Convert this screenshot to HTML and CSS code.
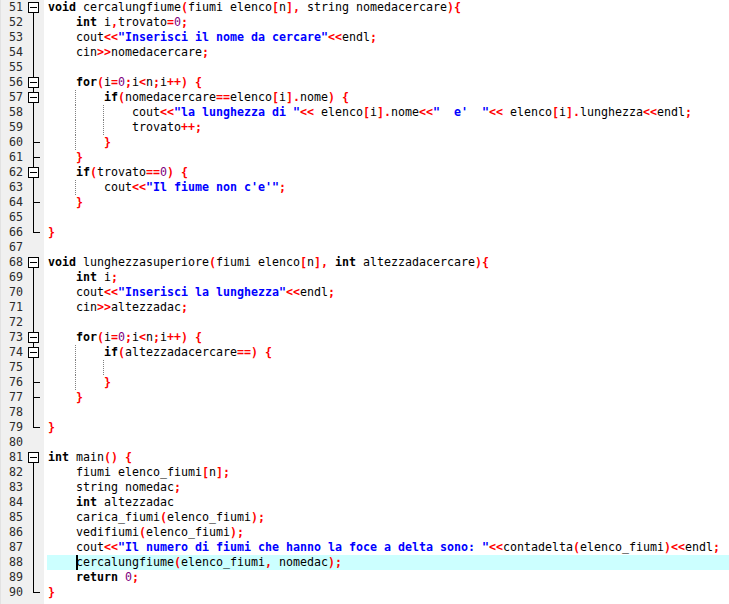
FILE: index.html
```html
<!DOCTYPE html>
<html>
<head>
<meta charset="utf-8">
<link rel="stylesheet" href="styles.css">
</head>
<body>
<div class="editor">
<div class="row"><div class="gut"><span class="num">51</span><span class="fold box first"></span></div><div class="code"><span class="k">void</span> cercalungfiume<span class="s">(</span>fiumi elenco<span class="s">[</span>n<span class="s">],</span> string nomedacercare<span class="s">){</span></div></div>
<div class="row"><div class="gut"><span class="num">52</span><span class="fold mid"></span></div><div class="code"><span class="i"></span><span class="k">int</span> i<span class="s">,</span>trovato<span class="s">=</span><span class="n">0</span><span class="s">;</span></div></div>
<div class="row"><div class="gut"><span class="num">53</span><span class="fold mid"></span></div><div class="code"><span class="i"></span>cout<span class="s">&lt;&lt;</span><span class="q">"Inserisci il nome da cercare"</span><span class="s">&lt;&lt;</span>endl<span class="s">;</span></div></div>
<div class="row"><div class="gut"><span class="num">54</span><span class="fold mid"></span></div><div class="code"><span class="i"></span>cin<span class="s">&gt;&gt;</span>nomedacercare<span class="s">;</span></div></div>
<div class="row"><div class="gut"><span class="num">55</span><span class="fold mid"></span></div><div class="code"></div></div>
<div class="row"><div class="gut"><span class="num">56</span><span class="fold box"></span></div><div class="code"><span class="i"></span><span class="k">for</span><span class="s">(</span>i<span class="s">=</span><span class="n">0</span><span class="s">;</span>i<span class="s">&lt;</span>n<span class="s">;</span>i<span class="s">++)</span> <span class="s">{</span></div></div>
<div class="row"><div class="gut"><span class="num">57</span><span class="fold box"></span></div><div class="code"><span class="i g"></span><span class="i"></span><span class="k">if</span><span class="s">(</span>nomedacercare<span class="s">==</span>elenco<span class="s">[</span>i<span class="s">].</span>nome<span class="s">)</span> <span class="s">{</span></div></div>
<div class="row"><div class="gut"><span class="num">58</span><span class="fold mid"></span></div><div class="code"><span class="i g"></span><span class="i g"></span><span class="i"></span>cout<span class="s">&lt;&lt;</span><span class="q">"la lunghezza di "</span><span class="s">&lt;&lt;</span> elenco<span class="s">[</span>i<span class="s">].</span>nome<span class="s">&lt;&lt;</span><span class="q">"  e'  "</span><span class="s">&lt;&lt;</span> elenco<span class="s">[</span>i<span class="s">].</span>lunghezza<span class="s">&lt;&lt;</span>endl<span class="s">;</span></div></div>
<div class="row"><div class="gut"><span class="num">59</span><span class="fold mid"></span></div><div class="code"><span class="i g"></span><span class="i g"></span><span class="i"></span>trovato<span class="s">++;</span></div></div>
<div class="row"><div class="gut"><span class="num">60</span><span class="fold tick"></span></div><div class="code"><span class="i g"></span><span class="i"></span><span class="s">}</span></div></div>
<div class="row"><div class="gut"><span class="num">61</span><span class="fold tick"></span></div><div class="code"><span class="i"></span><span class="s">}</span></div></div>
<div class="row"><div class="gut"><span class="num">62</span><span class="fold box"></span></div><div class="code"><span class="i"></span><span class="k">if</span><span class="s">(</span>trovato<span class="s">==</span><span class="n">0</span><span class="s">)</span> <span class="s">{</span></div></div>
<div class="row"><div class="gut"><span class="num">63</span><span class="fold mid"></span></div><div class="code"><span class="i g"></span><span class="i"></span>cout<span class="s">&lt;&lt;</span><span class="q">"Il fiume non c'e'"</span><span class="s">;</span></div></div>
<div class="row"><div class="gut"><span class="num">64</span><span class="fold tick"></span></div><div class="code"><span class="i"></span><span class="s">}</span></div></div>
<div class="row"><div class="gut"><span class="num">65</span><span class="fold mid"></span></div><div class="code"></div></div>
<div class="row"><div class="gut"><span class="num">66</span><span class="fold end"></span></div><div class="code"><span class="s">}</span></div></div>
<div class="row"><div class="gut"><span class="num">67</span><span class="fold"></span></div><div class="code"></div></div>
<div class="row"><div class="gut"><span class="num">68</span><span class="fold box first"></span></div><div class="code"><span class="k">void</span> lunghezzasuperiore<span class="s">(</span>fiumi elenco<span class="s">[</span>n<span class="s">],</span> <span class="k">int</span> altezzadacercare<span class="s">){</span></div></div>
<div class="row"><div class="gut"><span class="num">69</span><span class="fold mid"></span></div><div class="code"><span class="i"></span><span class="k">int</span> i<span class="s">;</span></div></div>
<div class="row"><div class="gut"><span class="num">70</span><span class="fold mid"></span></div><div class="code"><span class="i"></span>cout<span class="s">&lt;&lt;</span><span class="q">"Inserisci la lunghezza"</span><span class="s">&lt;&lt;</span>endl<span class="s">;</span></div></div>
<div class="row"><div class="gut"><span class="num">71</span><span class="fold mid"></span></div><div class="code"><span class="i"></span>cin<span class="s">&gt;&gt;</span>altezzadac<span class="s">;</span></div></div>
<div class="row"><div class="gut"><span class="num">72</span><span class="fold mid"></span></div><div class="code"></div></div>
<div class="row"><div class="gut"><span class="num">73</span><span class="fold box"></span></div><div class="code"><span class="i"></span><span class="k">for</span><span class="s">(</span>i<span class="s">=</span><span class="n">0</span><span class="s">;</span>i<span class="s">&lt;</span>n<span class="s">;</span>i<span class="s">++)</span> <span class="s">{</span></div></div>
<div class="row"><div class="gut"><span class="num">74</span><span class="fold box"></span></div><div class="code"><span class="i g"></span><span class="i"></span><span class="k">if</span><span class="s">(</span>altezzadacercare<span class="s">==)</span> <span class="s">{</span></div></div>
<div class="row"><div class="gut"><span class="num">75</span><span class="fold mid"></span></div><div class="code"><span class="i g"></span><span class="i g"></span></div></div>
<div class="row"><div class="gut"><span class="num">76</span><span class="fold tick"></span></div><div class="code"><span class="i g"></span><span class="i"></span><span class="s">}</span></div></div>
<div class="row"><div class="gut"><span class="num">77</span><span class="fold tick"></span></div><div class="code"><span class="i"></span><span class="s">}</span></div></div>
<div class="row"><div class="gut"><span class="num">78</span><span class="fold mid"></span></div><div class="code"></div></div>
<div class="row"><div class="gut"><span class="num">79</span><span class="fold end"></span></div><div class="code"><span class="s">}</span></div></div>
<div class="row"><div class="gut"><span class="num">80</span><span class="fold"></span></div><div class="code"></div></div>
<div class="row"><div class="gut"><span class="num">81</span><span class="fold box first"></span></div><div class="code"><span class="k">int</span> main<span class="s">()</span> <span class="s">{</span></div></div>
<div class="row"><div class="gut"><span class="num">82</span><span class="fold mid"></span></div><div class="code"><span class="i"></span>fiumi elenco_fiumi<span class="s">[</span>n<span class="s">];</span></div></div>
<div class="row"><div class="gut"><span class="num">83</span><span class="fold mid"></span></div><div class="code"><span class="i"></span>string nomedac<span class="s">;</span></div></div>
<div class="row"><div class="gut"><span class="num">84</span><span class="fold mid"></span></div><div class="code"><span class="i"></span><span class="k">int</span> altezzadac</div></div>
<div class="row"><div class="gut"><span class="num">85</span><span class="fold mid"></span></div><div class="code"><span class="i"></span>carica_fiumi<span class="s">(</span>elenco_fiumi<span class="s">);</span></div></div>
<div class="row"><div class="gut"><span class="num">86</span><span class="fold mid"></span></div><div class="code"><span class="i"></span>vedifiumi<span class="s">(</span>elenco_fiumi<span class="s">);</span></div></div>
<div class="row"><div class="gut"><span class="num">87</span><span class="fold mid"></span></div><div class="code"><span class="i"></span>cout<span class="s">&lt;&lt;</span><span class="q">"Il numero di fiumi che hanno la foce a delta sono: "</span><span class="s">&lt;&lt;</span>contadelta<span class="s">(</span>elenco_fiumi<span class="s">)&lt;&lt;</span>endl<span class="s">;</span></div></div>
<div class="row"><div class="gut"><span class="num">88</span><span class="fold mid"></span></div><div class="code active"><span class="i"></span><span class="caret"></span>cercalungfiume<span class="s">(</span>elenco_fiumi<span class="s">,</span> nomedac<span class="s">);</span></div></div>
<div class="row"><div class="gut"><span class="num">89</span><span class="fold mid"></span></div><div class="code"><span class="i"></span><span class="k">return</span> <span class="n">0</span><span class="s">;</span></div></div>
<div class="row"><div class="gut"><span class="num">90</span><span class="fold end"></span></div><div class="code"><span class="s">}</span></div></div>
</div>
</body>
</html>
```
FILE: styles.css
```css
html, body {
  margin: 0;
  padding: 0;
  background: #fff;
}
.editor {
  width: 729px;
  height: 604px;
  overflow: hidden;
  background: linear-gradient(to right, #e2e2e2 0 1px, #f0f0f0 1px 44px, #fff 44px);
  font-family: "DejaVu Sans Mono", "Liberation Mono", monospace;
  font-size: 11.63px;
  line-height: 15px;
  color: #000;
}
.row {
  display: flex;
  height: 15px;
}
.gut {
  width: 44px;
  flex: none;
  display: flex;
}
.num {
  width: 23px;
  text-align: right;
  color: #2b2b2b;
}
.fold {
  width: 21px;
  height: 15px;
  position: relative;
}
.fold::before, .fold::after {
  content: "";
  position: absolute;
  box-sizing: border-box;
}
/* vertical line */
.fold.mid::before, .fold.tick::before {
  left: 10px; top: 0; width: 1px; height: 15px; background: #000;
}
.fold.end::before {
  left: 10px; top: 0; width: 1px; height: 8px; background: #000;
}
.fold.tick::after, .fold.end::after {
  left: 10px; top: 7px; width: 7px; height: 1px; background: #000;
}
.fold.box::before {
  left: 10px; top: 0; width: 1px; height: 15px; background: #000;
}
.fold.box.first::before {
  top: 7px; height: 8px;
}
.fold.box::after {
  left: 5px; top: 2px; width: 11px; height: 11px;
  border: 1px solid #000;
  background: linear-gradient(#000, #000) center / 7px 1px no-repeat, #fff;
}
.code {
  flex: 1;
  margin-left: 3px;
  padding-left: 1px;
  white-space: pre;
  height: 15px;
}
.code.active {
  background: #ccffff;
}
.i {
  display: inline-block;
  width: 28px;
  height: 15px;
  vertical-align: top;
}
.i.g {
  background: repeating-linear-gradient(to bottom, #808080 0 1px, transparent 1px 2px) right top / 1px 15px no-repeat;
}
.caret {
  display: inline-block;
  width: 2px;
  height: 15px;
  margin-right: -2px;
  vertical-align: top;
  background: #000;
  position: relative;
  z-index: 1;
}
.k { font-weight: bold; }
.s { color: #ff0000; font-weight: bold; }
.n { color: #800080; }
.q { color: #0000ff; font-weight: bold; }
```
